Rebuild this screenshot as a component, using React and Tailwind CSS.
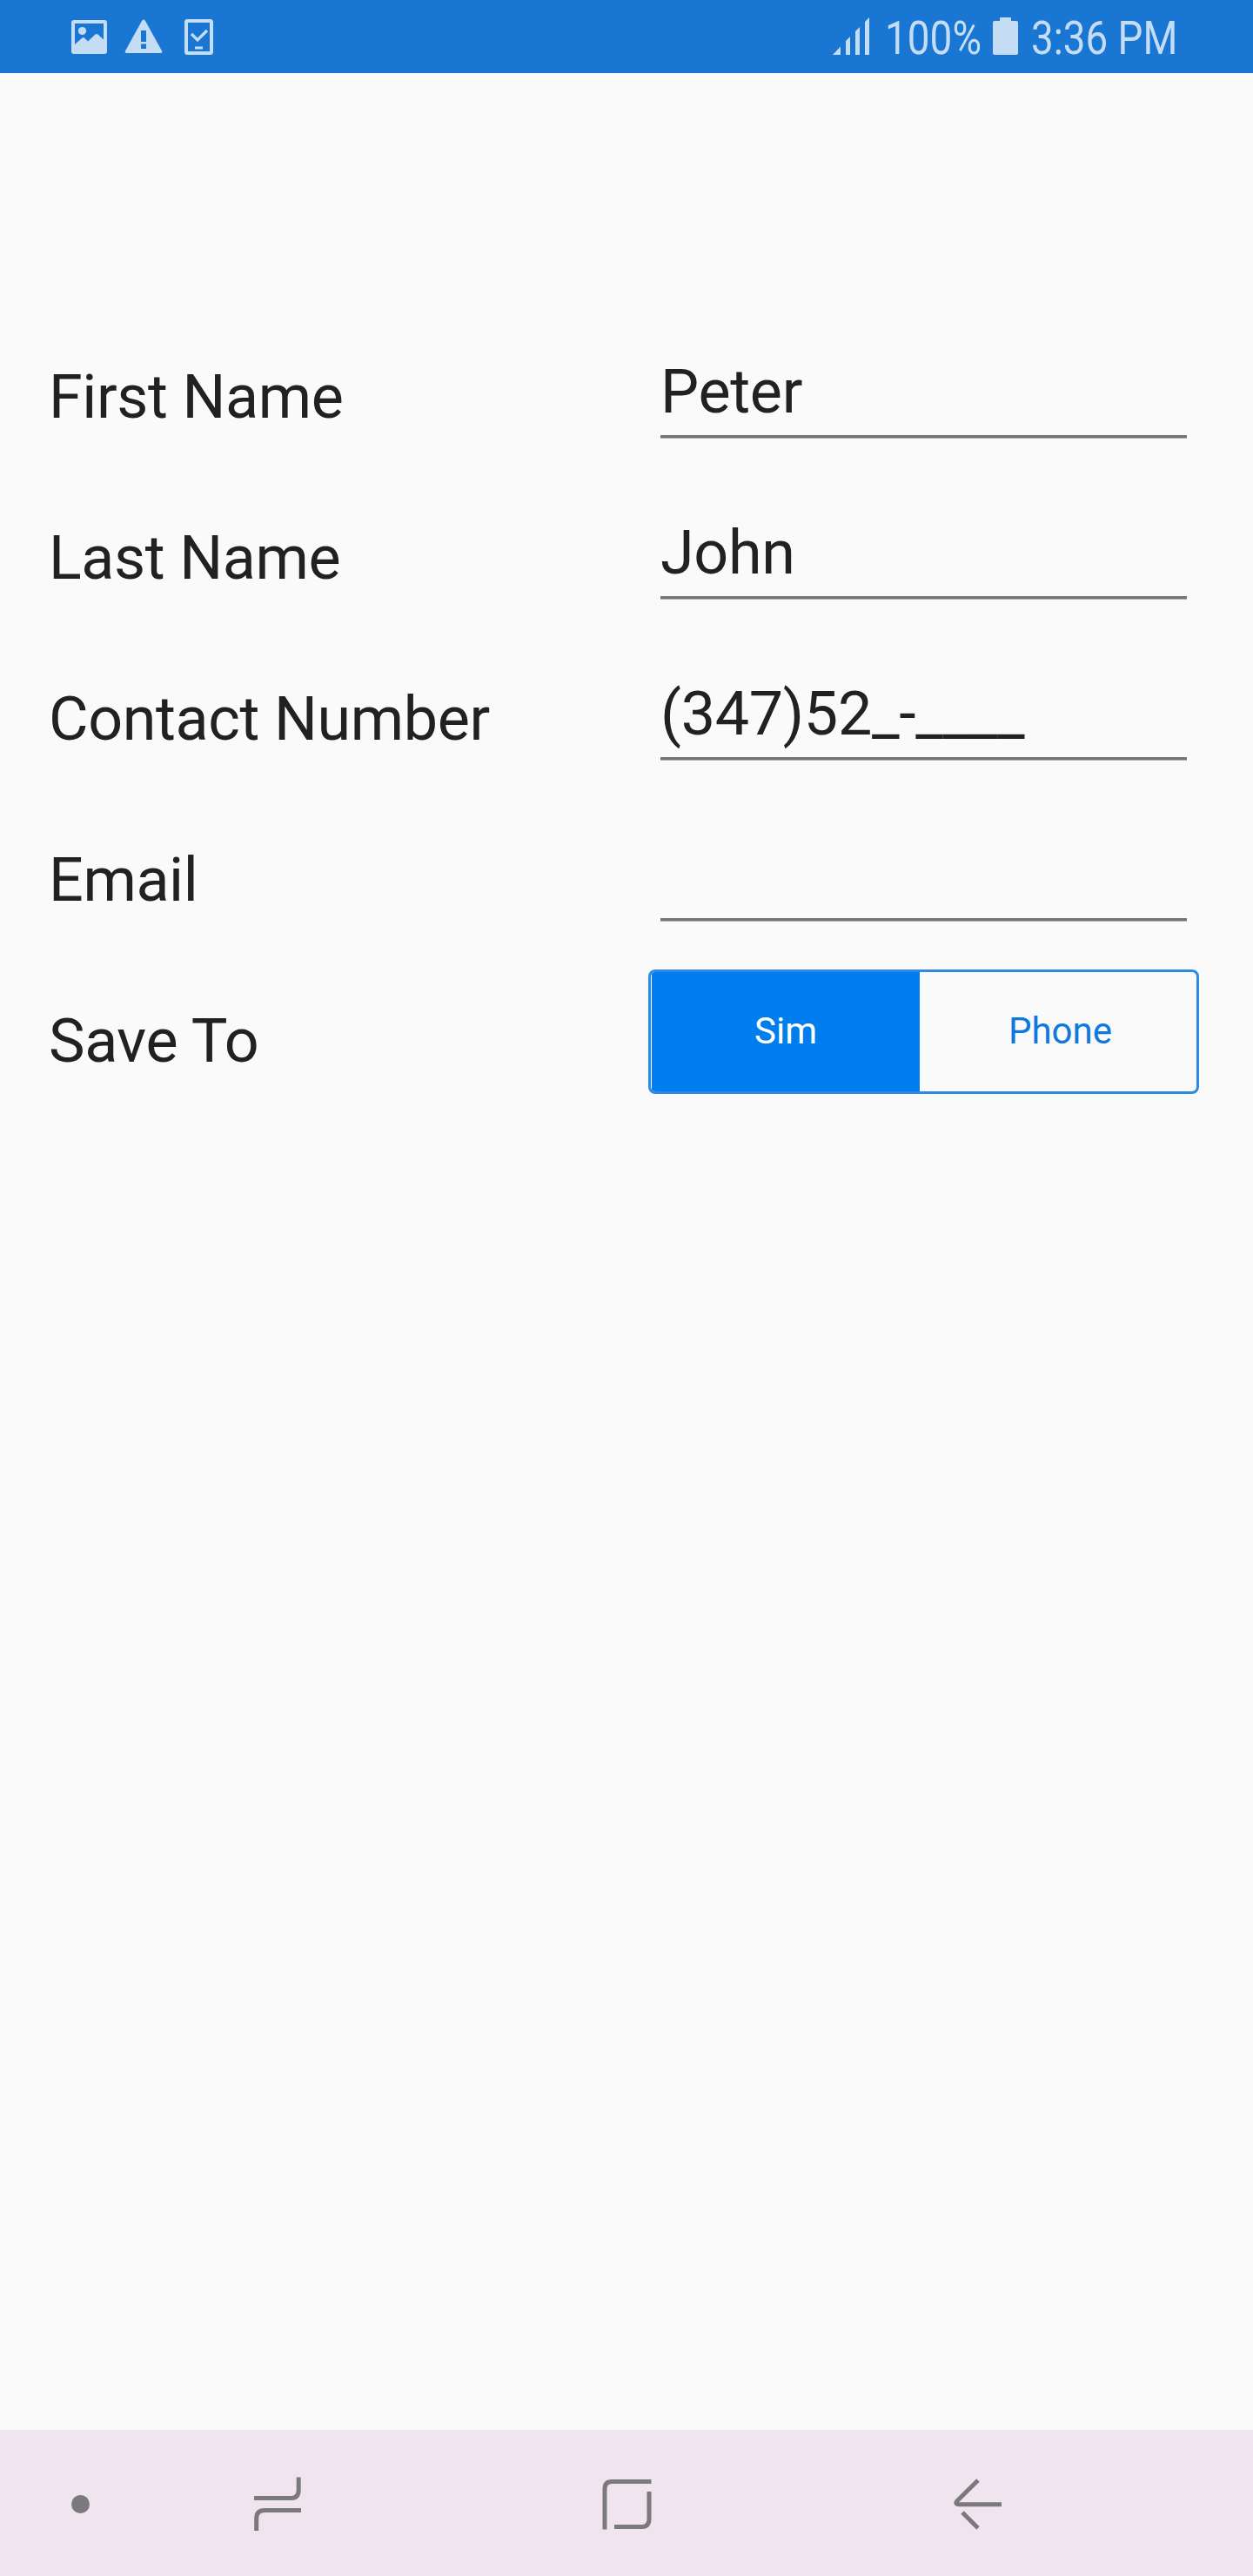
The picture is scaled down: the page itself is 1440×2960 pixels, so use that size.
import React from "react";

const fields = [
  { label: "First Name", value: "Peter" },
  { label: "Last Name", value: "John" },
  { label: "Contact Number", value: "(347)52_-____" },
  { label: "Email", value: "" },
];

function StatusBar() {
  return (
    <header className="flex h-[84px] w-full bg-[#1976d2] text-[#c5dcf5]">
      <svg className="ml-[81px] mt-[22px] h-[41px] w-[43px]" viewBox="0 0 43 41" fill="currentColor">
        <path
          fillRule="evenodd"
          d="M4 1H39Q42 1 42 4V37Q42 40 39 40H4Q1 40 1 37V4Q1 1 4 1ZM5 5V29L13.500 21.500Q15 20.500 16.500 22L20 25.500L28.500 17.500Q30 16.300 31.500 17.500L38 23.500V5Z"
        />
        <circle cx="13.500" cy="13.500" r="4.600" />
      </svg>
      <svg className="ml-[19px] mt-[22px] h-[40px] w-[44px]" viewBox="0 0 44 40" fill="currentColor">
        <path
          fillRule="evenodd"
          d="M22 .5Q23.200 .5 24 2L43 36.500Q44 39 41.500 39H2.500Q0 39 1 36.500L20 2Q20.800 .5 22 .5ZM19 13V26H25V13ZM19 28.500V34H25V28.500Z"
        />
      </svg>
      <svg className="ml-[25px] mt-[21px] h-[43px] w-[33px]" viewBox="0 0 33 43" fill="none" stroke="currentColor">
        <rect x="2" y="3" width="29" height="37" rx="1.500" strokeWidth="4" />
        <path d="M8 18L15 25L26 14" strokeWidth="3.200" />
        <path d="M12 34H21" strokeWidth="3" />
      </svg>
      <svg className="ml-[712px] mt-[20px] h-[43px] w-[43px]" viewBox="0 0 43 43" fill="currentColor">
        <path d="M0 43L9 33.500V43ZM15 43V27L20 22V43ZM26 43V16L31 11V43ZM37 43V5L42 0V43Z" />
      </svg>
      <div className="ml-[17px] mt-[12px] w-[110px]">
        <span className="block w-max origin-left scale-x-[0.85] whitespace-nowrap text-[54px] leading-[63px]">100%</span>
      </div>
      <svg className="ml-[14px] mt-[20px] h-[43px] w-[29px]" viewBox="0 0 29 43" fill="currentColor">
        <path d="M8 1Q8 0 9 0H20Q21 0 21 1V4H27Q29 4 29 6V41Q29 43 27 43H2Q0 43 0 41V6Q0 4 2 4H8Z" />
      </svg>
      <div className="ml-[15px] mt-[12px]">
        <span className="block w-max origin-left scale-x-[0.847] whitespace-nowrap text-[54px] leading-[63px]">3:36 PM</span>
      </div>
    </header>
  );
}

function Label({ children }) {
  return <div className="w-[702px] pt-[52px] text-[70px] leading-[82px] tracking-[-0.38px]">{children}</div>;
}

function Field({ label, value }) {
  return (
    <div className="flex h-[185px]">
      <Label>{label}</Label>
      <div className="ml-px mt-[46px] flex h-[95px] w-[605px] flex-col justify-between">
        <div className="h-[82px] whitespace-nowrap text-[70px] leading-[82px] tracking-[-0.3px]">{value}</div>
        <div className="h-1 border-b border-[#b0b0b0] bg-[#737373]" />
      </div>
    </div>
  );
}

function SaveTo() {
  return (
    <div className="flex h-[185px]">
      <Label>Save To</Label>
      <div className="-ml-[13px] mt-[11px] flex h-[143px] w-[633px] overflow-hidden rounded-[8px] border-[3px] border-[#2f8ae4] pl-px text-[42px] leading-[49px]">
        <div className="w-[308px] bg-[#007dee] pt-[43px] text-center text-white">Sim</div>
        <div className="flex-1 pl-[5px] pt-[43px] text-center text-[#0e78de]">Phone</div>
      </div>
    </div>
  );
}

function NavigationBar() {
  return (
    <nav className="flex h-[168px] w-full bg-[#f0e5ee] text-[#7b797b]">
      <div className="ml-[82px] mt-[75px] h-[21px] w-[21px] rounded-full bg-[#7b797b]" />
      <svg className="ml-[189px] mt-[54px] h-[62px] w-[54px]" viewBox="0 0 54 62" fill="none" stroke="currentColor" strokeWidth="5">
        <path d="M0 24.500H43Q51.200 24.500 51.200 15V.5" />
        <path d="M54 38.500H12Q2.700 38.500 2.700 48V62" />
      </svg>
      <svg className="ml-[346px] mt-[56px] h-[59px] w-[57px]" viewBox="0 0 57 59" fill="none" stroke="currentColor" strokeWidth="5">
        <path d="M56.500 3.500H11Q3 3.500 3 12V58.500" />
        <path d="M54 15V46Q54 55.500 46 55.500H14" />
      </svg>
      <svg className="ml-[347px] mt-[54px] h-[62px] w-[56px]" viewBox="0 0 56 62" fill="none" stroke="currentColor" strokeWidth="5">
        <path d="M28 4L4.200 27.500C1.500 30.500 3.200 31.800 6 31.800H55" />
        <path d="M10 41L28 59" />
      </svg>
    </nav>
  );
}

export default function App() {
  return (
    <div className="flex h-[2960px] w-[1440px] flex-col overflow-hidden bg-[#fafafa] font-['Roboto',sans-serif] text-[#212121]">
      <StatusBar />
      <main className="flex-1 pl-[56px] pt-[279px]">
        {fields.map((field) => (
          <Field key={field.label} label={field.label} value={field.value} />
        ))}
        <SaveTo />
      </main>
      <NavigationBar />
    </div>
  );
}
